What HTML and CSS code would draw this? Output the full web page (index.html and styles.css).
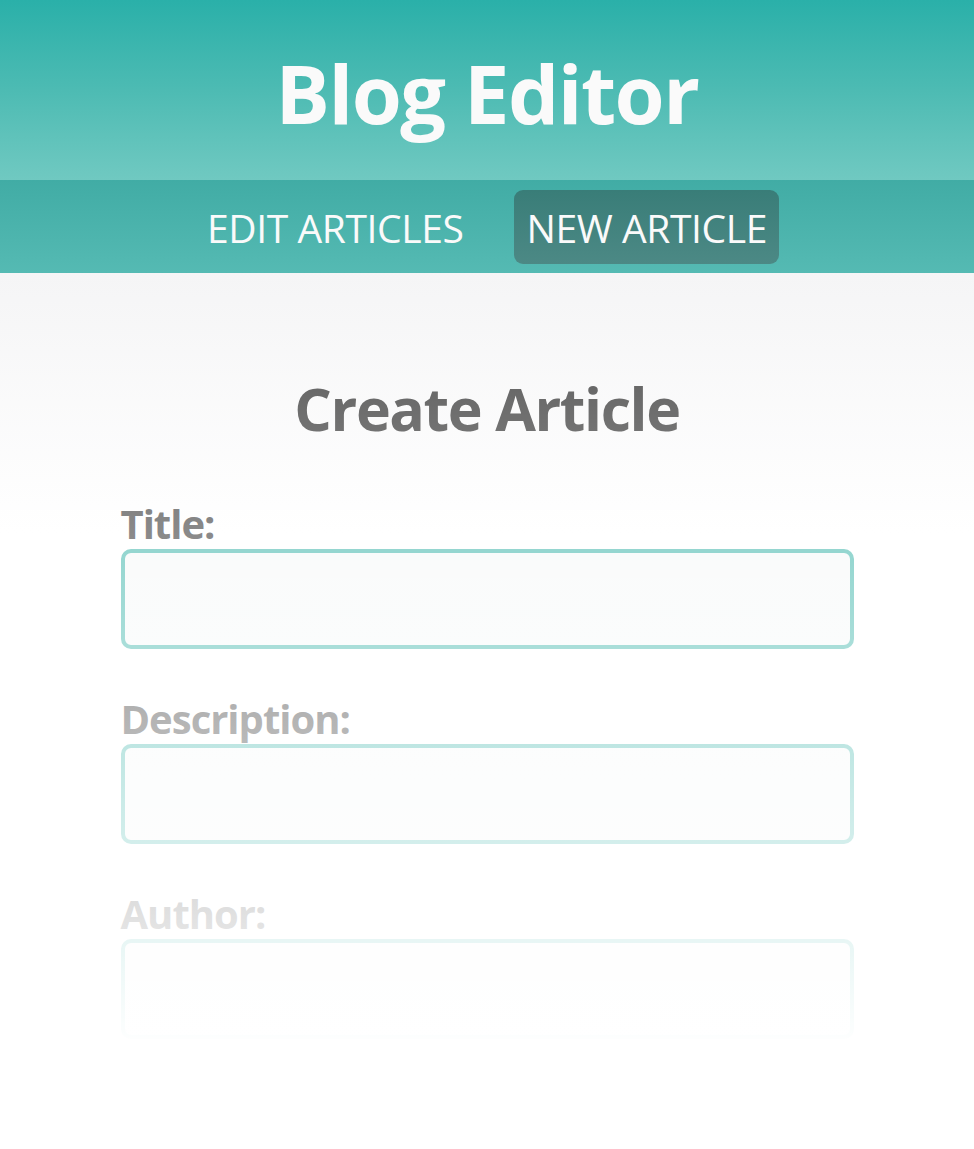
FILE: index.html
```html
<!DOCTYPE html>
<html lang="en">
<head>
<meta charset="utf-8">
<title>Blog Editor</title>
<link rel="stylesheet" href="styles.css">
</head>
<body>
<header class="site-header">
  <h1 class="site-title">Blog Editor</h1>
</header>
<nav class="site-nav">
  <a class="nav-link" href="#">EDIT ARTICLES</a>
  <a class="nav-link nav-link-active" href="#">NEW ARTICLE</a>
</nav>
<main class="main">
  <h2 class="page-title">Create Article</h2>
  <form class="article-form">
    <div class="field">
      <label class="field-label" for="title">Title:</label>
      <input class="field-input" id="title" type="text">
    </div>
    <div class="field">
      <label class="field-label" for="description">Description:</label>
      <input class="field-input" id="description" type="text">
    </div>
    <div class="field">
      <label class="field-label" for="author">Author:</label>
      <input class="field-input" id="author" type="text">
    </div>
  </form>
  <div class="fade"></div>
</main>
</body>
</html>
```

FILE: styles.css
```css
* { box-sizing: border-box; }
html, body { margin: 0; padding: 0; }
body {
  font-family: "Open Sans", "Noto Sans", sans-serif;
  background: #fff;
  width: 974px;
  height: 1149px;
  overflow: hidden;
}
.site-header {
  height: 180px;
  background: linear-gradient(to bottom, #2ab0a9 0%, #4dbbb3 50%, #70c9c1 100%);
  display: flex;
  align-items: center;
  justify-content: center;
}
.site-title {
  margin: 0;
  color: #fafafa;
  font-size: 81px;
  font-weight: 700;
  line-height: 1;
  letter-spacing: -1.5px;
  padding-top: 4px;
}
.site-nav {
  height: 93px;
  background: linear-gradient(to bottom, #41aca5, #55bab3);
  display: flex;
  justify-content: center;
  align-items: flex-start;
  gap: 39px;
  padding-top: 10px;
}
.nav-link {
  display: block;
  height: 74px;
  line-height: 76px;
  padding: 0 12px;
  color: #fafafa;
  text-decoration: none;
  font-size: 39px;
  font-weight: 400;
  letter-spacing: -0.4px;
  border-radius: 9px;
}
.nav-link-active {
  background: linear-gradient(to bottom, #397d78, #4c8985);
}
.main {
  position: relative;
  height: 876px;
  background: linear-gradient(to bottom, #f5f5f6 0px, #ffffff 260px);
  padding-top: 95px;
}
.page-title {
  margin: 0;
  text-align: center;
  color: #666;
  font-size: 59px;
  font-weight: 700;
  line-height: 80px;
  letter-spacing: -1.4px;
}
.article-form {
  width: 733px;
  margin: 51px auto 0;
  display: flex;
  flex-direction: column;
  gap: 45px;
}
.field { display: flex; flex-direction: column; }
.field-label {
  color: #666;
  font-size: 40px;
  font-weight: 700;
  line-height: 50px;
  letter-spacing: -1px;
}
.field-input {
  height: 100px;
  border: 4px solid #70c8c0;
  border-radius: 10px;
  background: #f8fafa;
  outline: none;
  font: inherit;
}
.fade {
  position: absolute;
  inset: 0;
  pointer-events: none;
  background: linear-gradient(to bottom, rgba(255,255,255,0) 104px, #ffffff 775px);
}
```
